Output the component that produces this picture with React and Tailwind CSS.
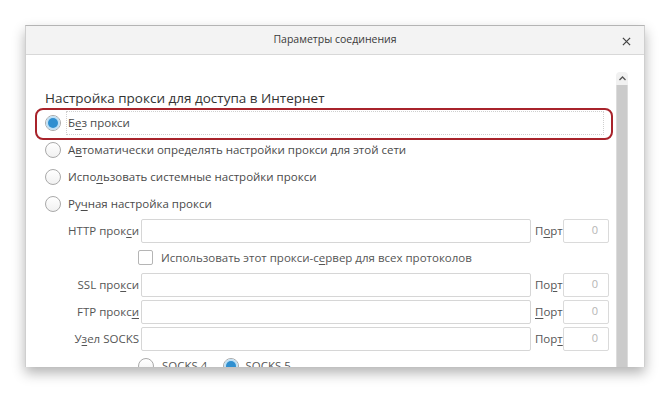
import React from 'react';

const font = { fontFamily: '"Open Sans", "Noto Sans", sans-serif' };

const Radio = ({ checked }) => (
  <span className="w-[16px] h-[16px] shrink-0 rounded-full border border-[#a9a9a9] bg-gradient-to-b from-white to-[#f1f1f1] flex items-center justify-center">
    {checked && (
      <span className="w-[10px] h-[10px] rounded-full bg-[#2f8fd0] ring-2 ring-[#bfe0f5]" />
    )}
  </span>
);

const Key = ({ children }) => <u className="underline decoration-1 underline-offset-2">{children}</u>;

const Field = ({ label }) => (
  <div className="h-[27px] flex items-center">
    <span className="w-[94px] text-right text-[#555] whitespace-nowrap">{label}</span>
    <div className="ml-[2px] w-[390px] h-[24px] border border-[#d6d6d6] rounded-[2px] bg-white" />
  </div>
);

const Port = ({ label }) => (
  <div className="h-[27px] flex items-center">
    <span className="w-[32px] pl-[4px] text-[#555] whitespace-nowrap">{label}</span>
    <div className="w-[46px] h-[24px] border border-[#dadada] rounded-[2px] bg-white flex items-center justify-end pr-[10px] text-[11px] text-[#b5b5b5]">
      0
    </div>
  </div>
);

export default function App() {
  return (
    <div className="w-[670px] h-[393px] bg-white overflow-hidden pt-[25px] pl-[25px]" style={font}>
      <div className="w-[620px] h-[342px] bg-white border-t border-l border-r border-t-[#b4b4b4] border-x-[#cfcfcf] shadow-[0_6px_12px_rgba(0,0,0,0.3)] flex flex-col">
        {/* Title bar */}
        <div className="h-[29px] shrink-0 bg-[#f3f3f3] border-b border-[#d8d8d8] flex items-center justify-center relative">
          <span className="text-[10.5px] text-[#3a3a3a]">Параметры соединения</span>
          <svg className="absolute right-[13px] top-[11px]" width="9" height="9" viewBox="0 0 10 10">
            <path d="M1 1 L9 9 M9 1 L1 9" stroke="#444" strokeWidth="1.4" />
          </svg>
        </div>

        {/* Body */}
        <div className="flex-1 flex overflow-hidden">
          <div className="flex-1 relative pt-[33px] pl-[19px] text-[11.5px] text-[#4a4a4a]">
            {/* highlight */}
            <div className="absolute left-[9px] top-[53px] w-[578px] h-[32px] border-2 border-[#a8232b] rounded-[8px]" />

            <div className="h-[21px] flex items-center text-[13.5px] text-[#333] whitespace-nowrap">
              Настройка прокси для доступа в Интернет
            </div>

            <div className="h-[27px] flex items-center">
              <Radio checked />
              <span className="ml-[5px] mr-[12px] flex-1 h-[24px] flex items-center pl-[1px] border border-dotted border-[#cfcfcf]">
                Б<Key>е</Key>з прокси
              </span>
            </div>
            <div className="h-[27px] flex items-center gap-[7px]">
              <Radio />
              <span>А<Key>в</Key>томатически определять настройки прокси для этой сети</span>
            </div>
            <div className="h-[27px] flex items-center gap-[7px]">
              <Radio />
              <span>Испо<Key>л</Key>ьзовать системные настройки прокси</span>
            </div>
            <div className="h-[27px] flex items-center gap-[7px]">
              <Radio />
              <span>Ру<Key>ч</Key>ная настройка прокси</span>
            </div>

            <div className="flex">
              <div>
                <Field label={<>HTTP прок<Key>с</Key>и</>} />
                <div className="h-[27px] flex items-center pl-[93px]">
                  <span className="w-[15px] h-[15px] border border-[#b5b5b5] rounded-[2px] bg-white" />
                  <span className="ml-[8px] text-[#555]">Использовать этот прокси-с<Key>е</Key>рвер для всех протоколов</span>
                </div>
                <Field label={<>SSL про<Key>к</Key>си</>} />
                <Field label={<>FTP прокс<Key>и</Key></>} />
                <Field label={<>У<Key>з</Key>ел SOCKS</>} />
                <div className="h-[27px] flex items-center pl-[93px] text-[#555]">
                  <Radio />
                  <span className="ml-[8px]">SOCKS 4</span>
                  <span className="ml-[16px]"><Radio checked /></span>
                  <span className="ml-[6px]">SOCKS 5</span>
                </div>
              </div>
              <div>
                <Port label={<>П<Key>о</Key>рт</>} />
                <div className="h-[27px]" />
                <Port label={<>По<Key>р</Key>т</>} />
                <Port label={<><Key>П</Key>орт</>} />
                <Port label={<>Пор<Key>т</Key></>} />
              </div>
            </div>
          </div>

          {/* Scrollbar */}
          <div className="w-[12px] shrink-0 flex flex-col pt-[17px]">
            <div className="h-[13px] rounded-t-[4px] bg-[#f1f1f1] flex items-center justify-center">
              <svg width="7" height="5" viewBox="0 0 7 5">
                <path d="M0.5 4 L3.5 1 L6.5 4" stroke="#555" strokeWidth="1.3" fill="none" />
              </svg>
            </div>
            <div className="flex-1 bg-[#cbcbcb] border-x border-[#dcdcdc]" />
          </div>
          <div className="w-[16px] shrink-0" />
        </div>
      </div>
    </div>
  );
}
